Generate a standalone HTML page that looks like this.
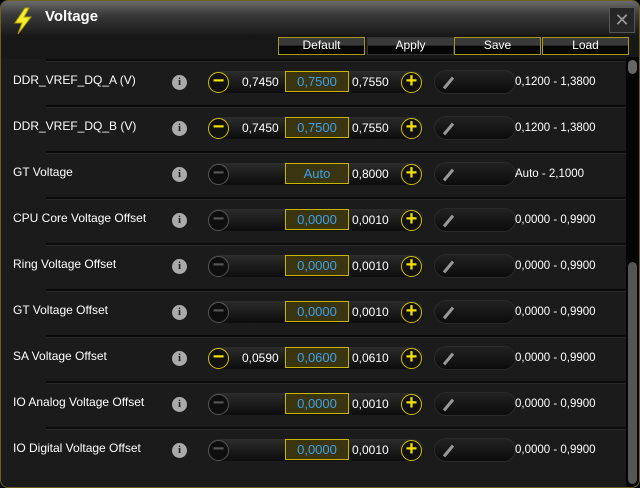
<!DOCTYPE html>
<html><head><style>
*{margin:0;padding:0;box-sizing:border-box}
body{width:640px;height:488px;background:#000;font-family:"Liberation Sans",sans-serif;overflow:hidden;position:relative}
.win{position:absolute;left:0;top:0;width:640px;height:488px;border:1px solid #6a6320;border-radius:8px;background:#181818;overflow:hidden}
.title{position:absolute;left:0;top:0;width:640px;height:34px;background:linear-gradient(#6a6a6a,#3a3a3a 40%,#1a1a1a)}
.title span{position:absolute;left:44px;top:7px;color:#fff;font-weight:bold;font-size:15px}
.close{position:absolute;left:608px;top:6px;width:26px;height:26px;background:#262626;border:1px solid #555;color:#999;font-size:18px;text-align:center;line-height:24px}
.btn{position:absolute;top:36px;height:18px;width:87px;background:linear-gradient(#3a3a3a 45%,#050505 50%);color:#fff;font-size:12px;text-align:center;line-height:15px;border:1px solid #a89a10}
.row{position:absolute;left:0;width:624px;height:46px;background:#1b1b1b}
.row:before{content:"";position:absolute;left:45px;right:0;top:0;height:2px;background:#0a0a0a;border-bottom:1px solid #2a2a2a}
.lbl{position:absolute;left:12px;top:14px;color:#fff;font-size:12px}
.info{position:absolute;left:171px;top:16px;width:15px;height:15px;border-radius:50%;background:#aaa;color:#222;font:bold 11px "Liberation Serif",serif;text-align:center;line-height:15px}
.track{position:absolute;left:207px;top:12px;width:216px;height:22px;border-radius:11px;background:linear-gradient(#2c2c2c,#0c0c0c)}
.c{position:absolute;top:13px;width:21px;height:21px;border-radius:50%;border:1.5px solid #d4c000;color:#f2e000;font-size:20px;line-height:17px;text-align:center;font-weight:bold;background:#111}
.c.off{border-color:#555;color:#555;background:#0e0e0e}
.val{position:absolute;left:284px;top:12px;width:64px;height:21px;border:1px solid #c9b500;background:#3a3510;color:#3aa0f0;font-size:13px;text-align:center;line-height:19px}
.n{position:absolute;top:16px;color:#fff;font-size:12px}
.pen{position:absolute;left:433px;top:11px;width:82px;height:24px;border-radius:12px;background:linear-gradient(#222,#0c0c0c);border:1px solid #2a2a2a}
.pen:after{content:"";position:absolute;left:12px;top:5px;width:3px;height:14px;background:#999;transform:rotate(40deg)}
.rng{position:absolute;left:514px;top:17px;color:#fff;font-size:11.5px}
.sb{position:absolute;left:625px;top:56px;width:13px;height:432px;background:#050505}
.th{position:absolute;left:627px;width:9px;border-radius:5px;background:#666}
</style></head><body><div class="win">
<div class="title"><svg style="position:absolute;left:10px;top:6px" width="24" height="28" viewBox="0 0 24 28"><path d="M14 1 L4 16 L11 16 L7 27 L20 10 L13 10 L18 1Z" fill="#f5ee30" stroke="#b0a000"/></svg><span>Voltage</span></div>
<div class="close">✕</div>
<div class="btn" style="left:277px">Default</div>
<div class="btn" style="left:366px;border-color:#333">Apply</div>
<div class="btn" style="left:453px">Save</div>
<div class="btn" style="left:541px">Load</div>

<div class="row" style="top:58px"><div class="lbl">DDR_VREF_DQ_A (V)</div><div class="info">i</div><div class="track"></div><div class="c" style="left:207px">−</div><div class="n" style="left:241px">0,7450</div><div class="val">0,7500</div><div class="n" style="left:351px">0,7550</div><div class="c" style="left:400px">+</div><div class="pen"></div><div class="rng">0,1200 - 1,3800</div></div>
<div class="row" style="top:104px"><div class="lbl">DDR_VREF_DQ_B (V)</div><div class="info">i</div><div class="track"></div><div class="c" style="left:207px">−</div><div class="n" style="left:241px">0,7450</div><div class="val">0,7500</div><div class="n" style="left:351px">0,7550</div><div class="c" style="left:400px">+</div><div class="pen"></div><div class="rng">0,1200 - 1,3800</div></div>
<div class="row" style="top:150px"><div class="lbl">GT Voltage</div><div class="info">i</div><div class="track"></div><div class="c off" style="left:207px">−</div><div class="val">Auto</div><div class="n" style="left:351px">0,8000</div><div class="c" style="left:400px">+</div><div class="pen"></div><div class="rng">Auto - 2,1000</div></div>
<div class="row" style="top:196px"><div class="lbl">CPU Core Voltage Offset</div><div class="info">i</div><div class="track"></div><div class="c off" style="left:207px">−</div><div class="val">0,0000</div><div class="n" style="left:351px">0,0010</div><div class="c" style="left:400px">+</div><div class="pen"></div><div class="rng">0,0000 - 0,9900</div></div>
<div class="row" style="top:242px"><div class="lbl">Ring Voltage Offset</div><div class="info">i</div><div class="track"></div><div class="c off" style="left:207px">−</div><div class="val">0,0000</div><div class="n" style="left:351px">0,0010</div><div class="c" style="left:400px">+</div><div class="pen"></div><div class="rng">0,0000 - 0,9900</div></div>
<div class="row" style="top:288px"><div class="lbl">GT Voltage Offset</div><div class="info">i</div><div class="track"></div><div class="c off" style="left:207px">−</div><div class="val">0,0000</div><div class="n" style="left:351px">0,0010</div><div class="c" style="left:400px">+</div><div class="pen"></div><div class="rng">0,0000 - 0,9900</div></div>
<div class="row" style="top:334px"><div class="lbl">SA Voltage Offset</div><div class="info">i</div><div class="track"></div><div class="c" style="left:207px">−</div><div class="n" style="left:241px">0,0590</div><div class="val">0,0600</div><div class="n" style="left:351px">0,0610</div><div class="c" style="left:400px">+</div><div class="pen"></div><div class="rng">0,0000 - 0,9900</div></div>
<div class="row" style="top:380px"><div class="lbl">IO Analog Voltage Offset</div><div class="info">i</div><div class="track"></div><div class="c off" style="left:207px">−</div><div class="val">0,0000</div><div class="n" style="left:351px">0,0010</div><div class="c" style="left:400px">+</div><div class="pen"></div><div class="rng">0,0000 - 0,9900</div></div>
<div class="row" style="top:426px;height:62px"><div class="lbl">IO Digital Voltage Offset</div><div class="info">i</div><div class="track"></div><div class="c off" style="left:207px">−</div><div class="val">0,0000</div><div class="n" style="left:351px">0,0010</div><div class="c" style="left:400px">+</div><div class="pen"></div><div class="rng">0,0000 - 0,9900</div></div>

<div class="sb"></div>
<div class="th" style="top:59px;height:14px"></div>
<div class="th" style="top:261px;height:222px;background:#555"></div>
</div></body></html>
